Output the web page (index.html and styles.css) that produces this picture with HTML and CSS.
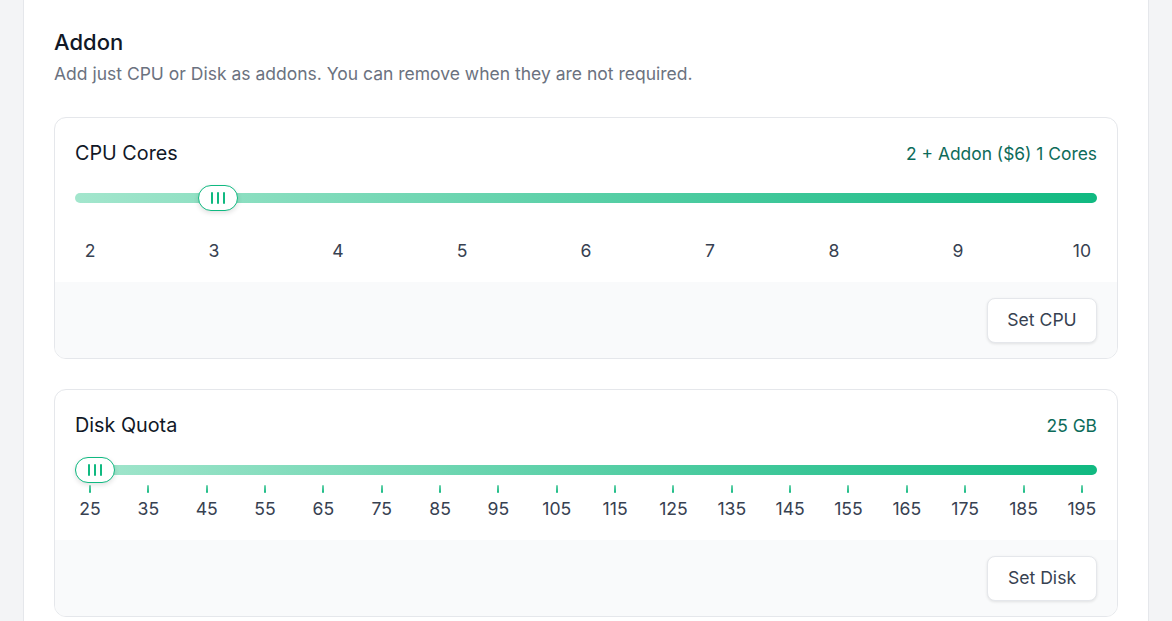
FILE: index.html
```html
<!DOCTYPE html>
<html lang="en">
<head>
<meta charset="utf-8">
<title>Addon</title>
<link rel="stylesheet" href="styles.css">
</head>
<body>
<main class="panel">
  <h2 class="panel-title">Addon</h2>
  <p class="panel-sub">Add just CPU or Disk as addons. You can remove when they are not required.</p>

  <div class="cards">
    <section class="card">
      <div class="card-body">
        <div class="card-head">
          <h3 class="card-title">CPU Cores</h3>
          <span class="card-value">2 + Addon ($6) 1 Cores</span>
        </div>
        <div class="slider slider-cpu">
          <div class="track">
            <div class="thumb" style="left: calc((100% - 40px) * 0.125)"><i></i><i></i><i></i></div>
          </div>
          <div class="marks">
            <span class="mark"><span class="mark-label">2</span></span>
            <span class="mark"><span class="mark-label">3</span></span>
            <span class="mark"><span class="mark-label">4</span></span>
            <span class="mark"><span class="mark-label">5</span></span>
            <span class="mark"><span class="mark-label">6</span></span>
            <span class="mark"><span class="mark-label">7</span></span>
            <span class="mark"><span class="mark-label">8</span></span>
            <span class="mark"><span class="mark-label">9</span></span>
            <span class="mark"><span class="mark-label">10</span></span>
          </div>
        </div>
      </div>
      <div class="card-foot">
        <button class="btn" type="button">Set CPU</button>
      </div>
    </section>

    <section class="card">
      <div class="card-body">
        <div class="card-head">
          <h3 class="card-title">Disk Quota</h3>
          <span class="card-value">25 GB</span>
        </div>
        <div class="slider slider-disk">
          <div class="track">
            <div class="thumb" style="left: 0"><i></i><i></i><i></i></div>
          </div>
          <div class="marks">
            <span class="mark"><span class="tick"></span><span class="mark-label">25</span></span>
            <span class="mark"><span class="tick"></span><span class="mark-label">35</span></span>
            <span class="mark"><span class="tick"></span><span class="mark-label">45</span></span>
            <span class="mark"><span class="tick"></span><span class="mark-label">55</span></span>
            <span class="mark"><span class="tick"></span><span class="mark-label">65</span></span>
            <span class="mark"><span class="tick"></span><span class="mark-label">75</span></span>
            <span class="mark"><span class="tick"></span><span class="mark-label">85</span></span>
            <span class="mark"><span class="tick"></span><span class="mark-label">95</span></span>
            <span class="mark"><span class="tick"></span><span class="mark-label">105</span></span>
            <span class="mark"><span class="tick"></span><span class="mark-label">115</span></span>
            <span class="mark"><span class="tick"></span><span class="mark-label">125</span></span>
            <span class="mark"><span class="tick"></span><span class="mark-label">135</span></span>
            <span class="mark"><span class="tick"></span><span class="mark-label">145</span></span>
            <span class="mark"><span class="tick"></span><span class="mark-label">155</span></span>
            <span class="mark"><span class="tick"></span><span class="mark-label">165</span></span>
            <span class="mark"><span class="tick"></span><span class="mark-label">175</span></span>
            <span class="mark"><span class="tick"></span><span class="mark-label">185</span></span>
            <span class="mark"><span class="tick"></span><span class="mark-label">195</span></span>
          </div>
        </div>
      </div>
      <div class="card-foot">
        <button class="btn" type="button">Set Disk</button>
      </div>
    </section>
  </div>
</main>
</body>
</html>
```

FILE: styles.css
```css
* {
  box-sizing: border-box;
}

html, body {
  margin: 0;
  padding: 0;
}

body {
  background: #f3f4f6;
  font-family: Inter, "Noto Sans", "Liberation Sans", sans-serif;
  color: #111827;
  height: 621px;
  overflow: hidden;
}

.panel {
  margin-left: 23px;
  width: 1126px;
  min-height: 100%;
  background: #ffffff;
  border-left: 1px solid #e5e7eb;
  border-right: 1px solid #e5e7eb;
  padding: 28px 30px 30px;
}

.panel-title {
  margin: 0;
  font-size: 22px;
  line-height: 28px;
  font-weight: 500;
  color: #111827;
}

.panel-sub {
  margin: 6px 0 0;
  font-size: 17.5px;
  line-height: 24px;
  color: #6b7280;
}

.cards {
  margin-top: 31px;
  display: flex;
  flex-direction: column;
  gap: 30px;
}

.card {
  border: 1px solid #e5e7eb;
  border-radius: 12px;
  overflow: hidden;
  background: #ffffff;
}

.card-body {
  padding: 19px 20px 0;
}

.card-head {
  display: flex;
  align-items: center;
  justify-content: space-between;
  height: 32px;
}

.card-title {
  margin: 0;
  font-size: 19.8px;
  font-weight: 400;
  color: #111827;
}

.card-value {
  font-size: 17.4px;
  font-weight: 400;
  color: #0d6b5a;
}

.slider {
  padding-top: 24px;
}

.track {
  position: relative;
  height: 10px;
  border-radius: 5px;
  background: linear-gradient(90deg, #a3e6cd 0%, #10b981 100%);
}

.thumb {
  position: absolute;
  top: -8px;
  width: 40px;
  height: 26px;
  border: 1px solid #10b981;
  border-radius: 13px;
  background: #ffffff;
  box-shadow: 0 2px 5px rgba(0, 0, 0, 0.12);
  display: flex;
  align-items: center;
  justify-content: center;
  gap: 3.5px;
}

.thumb i {
  display: block;
  width: 2.5px;
  height: 12px;
  border-radius: 1px;
  background: #10b981;
}

.marks {
  display: flex;
  justify-content: space-between;
}

.mark {
  width: 30px;
  display: flex;
  flex-direction: column;
  align-items: center;
}

.mark-label {
  font-size: 17.6px;
  line-height: 24px;
  color: #374151;
  white-space: nowrap;
}

.tick {
  display: block;
  width: 2px;
  height: 8px;
  border-radius: 1px;
  background: linear-gradient(180deg, #6fd3ae, #10b981);
}

.slider-cpu .marks {
  margin-top: 36px;
  padding-bottom: 19px;
}

.slider-disk .marks {
  margin-top: 10px;
  padding-bottom: 19px;
}

.slider-disk .tick {
  margin-bottom: 4px;
}

.card-foot {
  background: #f9fafb;
  display: flex;
  justify-content: flex-end;
  padding: 16px 20px 15px;
}

.btn {
  font-family: inherit;
  font-size: 17.6px;
  line-height: 24px;
  color: #374151;
  background: #ffffff;
  border: 1px solid #e5e7eb;
  border-radius: 8px;
  padding: 9px 0 10px;
  width: 110px;
  box-shadow: 0 1px 3px rgba(0, 0, 0, 0.1);
}
```
